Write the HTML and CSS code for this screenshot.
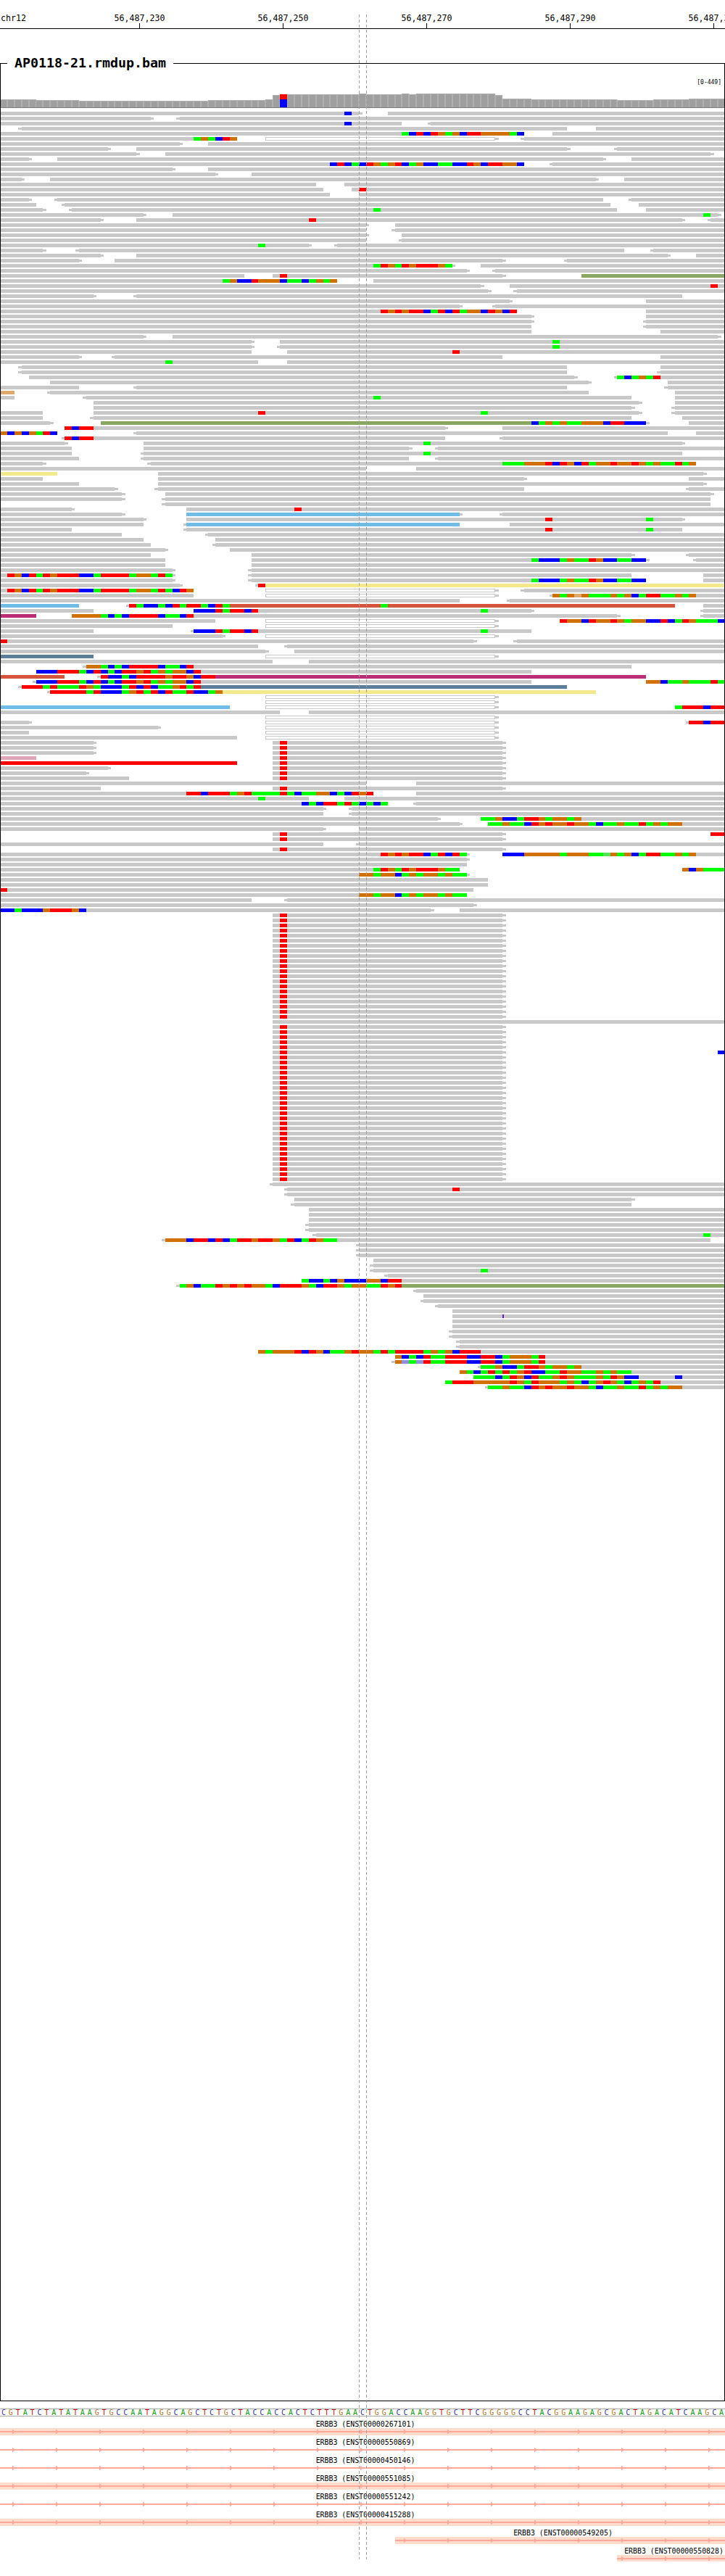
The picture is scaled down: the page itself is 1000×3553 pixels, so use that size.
FILE: index.html
```html
<!DOCTYPE html>
<html lang="en">
<head>
<meta charset="utf-8">
<title>AP0118-21.rmdup.bam</title>
<link rel="stylesheet" href="styles.css">
</head>
<body>
<div class="page">
<header class="ruler">
<div class="chr">chr12</div>
<div class="tick">56,487,230</div>
<div class="tick">56,487,250</div>
<div class="tick">56,487,270</div>
<div class="tick">56,487,290</div>
<div class="tick">56,487,310</div>
</header>

<section class="panel">
<h1 class="panel-title">AP0118-21.rmdup.bam</h1>
<div class="range">[0-449]</div>
<svg class="coverage" viewBox="0 87 101 67" preserveAspectRatio="none">
<defs>
<clipPath id="covclip"><path d="M0 137H5V138H11V139H29V138H37V137H38V131H39V130H50V129H51V130H56V129H57V130H58V129H69V131H70V136H74V137H86V138H91V137H96V136H101V148H0z"/></clipPath>
<path id="covshape" d="M0 137H5V138H11V139H29V138H37V137H38V131H39V130H50V129H51V130H56V129H57V130H58V129H69V131H70V136H74V137H86V138H91V137H96V136H101V148H0z"/>
</defs>
<use href="#covshape" class="cov-edge"/>
<use href="#covshape" class="cov-fill" y="1"/>
<path class="cov-sep" clip-path="url(#covclip)" d="M0 139H101"/>
<path class="cov-red" d="M39 130h1v7h-1z"/>
<path class="cov-blue" d="M39 137h1v11h-1z"/>
<path class="cov-base" d="M0 148h101v1H0z"/>
</svg>

<svg class="reads" viewBox="0 -.357 101 252" preserveAspectRatio="none">
<defs>
<g id="rr"><path class="gr" d="M38 0H70"/><path class="cr" d="M39 0h1"/><path class="tip" d="M70 0h.45"/></g>
<g id="ol"><path class="gr" d="M37 0H69"/><path class="hollow" d="M37.1 0H68.9"/><path class="tip" d="M69 0h.45"/></g>
<g id="c1"><path class="cg" d="M52 0h1M55 0h1M62 0h1"/><path class="cr" d="M53 0h1M56 0h1M58 0h3"/><path class="co" d="M54 0h1M57 0h1M61 0h1"/></g>
<g id="c2"><path class="cr" d="M53 0h1M55 0h1M57 0h2M61 0h1M63 0h1"/><path class="co" d="M54 0h1M56 0h1"/><path class="cb" d="M59 0h1M62 0h1"/><path class="cg" d="M60 0h1M64 0h1"/></g>
<g id="c3"><path class="cr" d="M9 0h1M11 0h2"/><path class="cb" d="M10 0h1"/></g>
<g id="c4"><path class="cg" d="M74 0h1M78 0h1M80 0h2M86 0h2"/><path class="cb" d="M75 0h3M84 0h2M88 0h2"/><path class="co" d="M79 0h1M83 0h1"/><path class="cr" d="M82 0h1"/></g>
<g id="c5"><path class="cr" d="M1 0h1M4 0h1M6 0h1M8 0h3M14 0h4M22 0h1"/><path class="co" d="M2 0h1M7 0h1M19 0h2"/><path class="cb" d="M3 0h1M11 0h2"/><path class="cg" d="M5 0h1M13 0h1M18 0h1M21 0h1M23 0h1"/></g>
<g id="c6"><path class="cb" d="M27 0h3M34 0h1"/><path class="cr" d="M30 0h1M32 0h2M35 0h1"/><path class="cg" d="M31 0h1M67 0h1"/></g>
<g id="c7"><path class="cg" d="M14 0h1M16 0h1M23 0h2"/><path class="cb" d="M15 0h1M17 0h1M22 0h1M25 0h1"/><path class="cr" d="M18 0h4M26 0h1"/></g>
<g id="c8"><path class="cb" d="M5 0h3M12 0h1M14 0h1M16 0h1M26 0h1"/><path class="cr" d="M8 0h3M13 0h1M17 0h2M20 0h1M27 0h1"/><path class="cg" d="M11 0h1M15 0h1M21 0h1M23 0h1"/><path class="co" d="M19 0h1M22 0h1M24 0h2"/></g>
<g id="c9"><path class="cg" d="M67 0h2M72 0h1M76 0h1M79 0h1"/><path class="co" d="M69 0h1M75 0h1M77 0h2M80 0h1"/><path class="cb" d="M70 0h2"/><path class="cr" d="M73 0h2"/></g>
<g id="c10"><path class="cg" d="M68 0h2M71 0h2M82 0h1M84 0h2M87 0h2M90 0h1M92 0h1"/><path class="co" d="M70 0h1M75 0h1M77 0h2M80 0h2M86 0h1M91 0h1M93 0h2"/><path class="cb" d="M73 0h1M83 0h1"/><path class="cr" d="M74 0h1M76 0h1M79 0h1M89 0h1"/></g>
<g id="c11"><path class="co" d="M50 0h2M53 0h2M57 0h1M59 0h2M62 0h1"/><path class="cg" d="M52 0h1M56 0h1M58 0h1M61 0h1M63 0h2"/><path class="cb" d="M55 0h1"/></g>
</defs>

<path class="gr" d="M0 0H50M54 0H101M0 1H21M25 1H101M0 2H56M60 2H101M3 3H79M83 3H101M0 4H56M77 4H101M0 5H27M73 5H101M0 6H25M29 6H101M0 7H15M19 7H79M86 7H101M0 8H19M23 8H99M0 9H4M8 9H84M88 9H101M0 10H46M77 10H101M0 11H24M29 11H101M0 12H30M35 12H101M0 13H3M7 13H83M87 13H101M0 14H44M48 14H101M0 15H45M49 15H101M0 16H46M50 16H101M0 17H4M8 17H84M88 17H101M0 18H5M9 18H85M89 18H101M0 19H6M10 19H86M90 19H101M0 20H20M24 20H100M0 21H14M19 21H95M99 21H101M0 22H51M55 22H101M0 23H51M55 23H101M0 24H51M56 24H101M0 25H51M56 25H101M0 26H43M47 26H101M0 27H6M11 27H87M91 27H101M0 28H14M19 28H93M97 28H101M0 29H11M16 29H70M79 29H101M0 30H52M67 30H101M0 31H65M69 31H101M0 32H34M38 32H70M0 33H31M52 33H101M0 34H67M71 34H101M0 35H68M72 35H101M0 36H13M19 36H95M0 37H71M90 37H101M0 38H64M69 38H101M0 39H53M90 39H101M0 40H74M90 40H101M0 41H74M90 41H101M0 42H74M90 42H101M0 43H74M92 43H101M0 44H20M24 44H100M0 45H35M39 45H101M0 46H35M39 46H101M0 47H35M40 47H101M0 48H11M16 48H70M92 48H101M0 49H36M40 49H101M3 50H79M92 50H101M3 51H79M92 51H101M4 52H80M92 52H101M7 53H82M93 53H101M0 54H11M19 54H79M93 54H101M7 55H82M94 55H101M0 56H2M12 56H88M94 56H101M13 57H89M94 57H101M13 58H88M94 58H101M0 59H6M13 59H89M94 59H101M0 60H6M13 60H88M95 60H101M0 61H7M96 61H101M13 62H62M70 62H101M19 63H93M97 63H101M13 64H62M70 64H101M0 65H9M20 65H95M0 66H10M20 66H57M61 66H101M0 67H10M20 67H95M0 68H11M20 68H57M61 68H101M0 69H6M21 69H70M0 70H51M58 70H101M22 71H98M0 72H6M22 72H73M96 72H101M0 73H11M22 73H98M0 74H16M22 74H73M96 74H101M0 75H17M23 75H99M0 76H17M23 76H99M23 77H99M0 78H10M26 78H101M0 79H17M70 79H101M0 80H20M26 80H95M0 81H20M71 81H101M0 82H10M26 82H95M0 83H17M29 83H101M0 84H20M30 84H101M0 85H21M30 85H101M0 86H23M32 86H101M0 87H21M35 87H88M96 87H101M0 88H23M35 88H74M97 88H101M0 89H23M35 89H101M0 90H24M35 90H101M0 91H1M35 91H88M98 91H101M0 92H24M35 92H74M98 92H101M0 93H25M0 94H1M73 94H101M0 95H27M97 95H101M0 96H64M71 96H101M98 97H101M0 98H13M36 98H74M98 98H101M27 99H86M98 99H101M0 100H30M0 101H24M0 102H13M36 102H74M0 103H31M1 104H66M72 104H101M0 105H36M40 105H101M0 106H37M41 106H101M0 108H38M43 108H101M27 109H88M28 110H74M28 112H74M0 118H39M43 118H101M0 120H4M0 121H22M0 122H4M0 123H33M0 124H13M0 125H13M0 126H13M0 129H15M0 130H12M0 131H18M0 132H51M58 132H101M0 133H14M0 134H26M58 134H101M0 135H43M48 135H101M0 136H42M58 136H101M0 137H45M49 137H101M0 138H45M49 138H101M0 139H61M81 139H101M0 140H64M95 140H101M0 141H45M50 141H101M0 144H45M50 144H101M0 146H53M97 146H101M0 147H65M0 148H65M0 149H52M0 150H50M0 151H68M0 152H68M1 153H66M0 154H50M0 155H35M40 155H101M0 156H66M12 157H60M64 157H101M38 179H101M38 211H101M40 212H101M40 213H101M41 214H88M41 215H88M43 216H101M43 217H101M43 218H101M43 219H101M43 220H101M44 221H101M47 222H99M50 223H101M50 224H101M50 225H101M52 226H101M52 227H101M52 228H101M54 229H101M56 230H101M58 232H101M59 233H101M59 234H101M61 235H101M63 236H101M63 237H101M63 238H101M63 239H101M63 240H101M63 241H101M64 242H101M64 243H101M67 244H101M76 245H101M76 246H101M81 247H101M88 248H101M89 249H101M92 250H101M95 251H101"/>

<path class="tip" d="M50 0h.45M21 1h.45M25 1h-.45M60 2h-.45M3 3h-.45M73 5h-.45M25 6h.45M15 7h.45M79 7h.45M86 7h-.45M19 8h.45M99 8h.45M4 9h.45M84 9h.45M77 10h-.45M24 11h.45M30 12h.45M3 13h.45M83 13h.45M4 17h.45M8 17h-.45M88 17h-.45M9 18h-.45M6 19h.45M10 19h-.45M20 20h.45M100 20h.45M14 21h.45M95 21h.45M99 21h-.45M51 22h.45M55 23h-.45M51 24h.45M56 25h-.45M43 26h.45M47 26h-.45M6 27h.45M11 27h-.45M91 27h-.45M14 28h.45M93 28h.45M11 29h.45M70 29h.45M79 29h-.45M63 30h.45M65 31h.45M69 31h-.45M70 32h.45M67 34h.45M68 35h.45M72 35h-.45M13 36h.45M19 36h-.45M71 37h.45M64 38h.45M69 38h-.45M74 40h.45M74 41h.45M90 41h-.45M90 42h-.45M20 44h.45M100 44h.45M35 45h.45M35 46h.45M39 46h-.45M11 48h.45M16 48h-.45M3 50h-.45M3 51h-.45M92 51h-.45M80 52h.45M86 52h-.45M82 53h.45M19 54h-.45M93 54h-.45M7 55h-.45M12 56h-.45M89 57h.45M88 58h.45M94 58h-.45M89 59h.45M94 59h-.45M13 60h-.45M7 61h.45M90 61h.45M62 62h.45M19 63h-.45M9 64h-.45M70 64h-.45M9 65h.45M95 65h.45M57 66h.45M61 66h-.45M20 67h-.45M20 68h-.45M61 68h-.45M6 69h.45M21 69h-.45M98 71h.45M73 72h.45M98 73h.45M16 74h.45M22 74h-.45M96 74h-.45M17 75h.45M99 75h.45M17 76h.45M23 76h-.45M23 77h-.45M10 78h.45M17 79h.45M64 79h.45M70 79h-.45M20 80h.45M95 80h.45M26 81h-.45M26 82h-.45M29 83h-.45M30 85h-.45M23 86h.45M88 87h.45M96 87h-.45M90 88h.45M97 88h-.45M24 90h.45M35 90h-.45M24 91h.45M35 91h-.45M24 92h.45M35 92h-.45M25 93h.45M36 93h-.45M73 94h-.45M77 95h-.45M71 96h-.45M18 97h-.45M74 98h.45M98 98h-.45M86 99h.45M98 99h-.45M27 102h-.45M31 103h.45M66 104h.45M72 104h-.45M40 105h-.45M37 106h.45M12 109h-.45M14 111h-.45M5 112h-.45M3 113h-.45M7 114h-.45M4 120h.45M96 120h-.45M22 121h.45M13 124h.45M13 125h.45M13 126h.45M15 129h.45M12 130h.45M58 136h-.45M45 137h.45M49 137h-.45M49 138h-.45M61 139h.45M64 140h.45M45 141h.45M50 144h-.45M65 146h.45M65 147h.45M65 150h.45M40 155h-.45M66 156h.45M60 157h.45M38 211h-.45M40 212h-.45M40 213h-.45M88 214h.45M41 215h-.45M43 219h-.45M43 220h-.45M44 221h-.45M23 222h-.45M50 223h-.45M50 224h-.45M50 225h-.45M52 227h-.45M52 228h-.45M54 229h-.45M25 231h-.45M58 232h-.45M59 234h-.45M61 235h-.45M63 240h-.45M63 241h-.45M64 242h-.45M64 243h-.45M55 246h-.45M67 247h-.45M68 251h-.45"/>

<use href="#ol" y="5"/><use href="#ol" y="94"/><use href="#ol" y="95"/><use href="#ol" y="100"/><use href="#ol" y="101"/><use href="#ol" y="103"/><use href="#ol" y="107"/><use href="#ol" y="115"/><use href="#ol" y="116"/><use href="#ol" y="117"/><use href="#ol" y="119"/><use href="#ol" y="120"/><use href="#ol" y="121"/><use href="#ol" y="122"/><use href="#ol" y="123"/>

<use href="#rr" y="124"/><use href="#rr" y="125"/><use href="#rr" y="126"/><use href="#rr" y="127"/><use href="#rr" y="128"/><use href="#rr" y="129"/><use href="#rr" y="130"/><use href="#rr" y="131"/><use href="#rr" y="133"/><use href="#rr" y="142"/><use href="#rr" y="143"/><use href="#rr" y="145"/><use href="#rr" y="158"/><use href="#rr" y="159"/><use href="#rr" y="160"/><use href="#rr" y="161"/><use href="#rr" y="162"/><use href="#rr" y="163"/><use href="#rr" y="164"/><use href="#rr" y="165"/><use href="#rr" y="166"/><use href="#rr" y="167"/><use href="#rr" y="168"/><use href="#rr" y="169"/><use href="#rr" y="170"/><use href="#rr" y="171"/><use href="#rr" y="172"/><use href="#rr" y="173"/><use href="#rr" y="174"/><use href="#rr" y="175"/><use href="#rr" y="176"/><use href="#rr" y="177"/><use href="#rr" y="178"/><use href="#rr" y="180"/><use href="#rr" y="181"/><use href="#rr" y="182"/><use href="#rr" y="183"/><use href="#rr" y="184"/><use href="#rr" y="185"/><use href="#rr" y="186"/><use href="#rr" y="187"/><use href="#rr" y="188"/><use href="#rr" y="189"/><use href="#rr" y="190"/><use href="#rr" y="191"/><use href="#rr" y="192"/><use href="#rr" y="193"/><use href="#rr" y="194"/><use href="#rr" y="195"/><use href="#rr" y="196"/><use href="#rr" y="197"/><use href="#rr" y="198"/><use href="#rr" y="199"/><use href="#rr" y="200"/><use href="#rr" y="201"/><use href="#rr" y="202"/><use href="#rr" y="203"/><use href="#rr" y="204"/><use href="#rr" y="205"/><use href="#rr" y="206"/><use href="#rr" y="207"/><use href="#rr" y="208"/><use href="#rr" y="209"/><use href="#rr" y="210"/>

<use href="#c1" y="30"/><use href="#c1" y="149"/>
<use href="#c2" y="39"/><use href="#c2" y="146"/>
<use href="#c3" y="62"/><use href="#c3" y="64"/>
<use href="#c4" y="88"/><use href="#c4" y="92"/>
<use href="#c5" y="91"/><use href="#c5" y="94"/>
<use href="#c6" y="98"/><use href="#c6" y="102"/>
<use href="#c7" y="99"/><use href="#c7" y="109"/>
<use href="#c8" y="110"/><use href="#c8" y="112"/>
<use href="#c9" y="139"/><use href="#c9" y="247"/>
<use href="#c10" y="140"/><use href="#c10" y="251"/>
<use href="#c11" y="150"/><use href="#c11" y="154"/>

<path class="cbrick" d="M32 97H53M54 97H94M0 111H9"/>
<path class="cmag" d="M0 99H5M30 111H90"/>
<path class="cslate" d="M0 107H13M28 113H79"/>
<path class="csky" d="M26 79H64M26 81H64M0 97H11M0 117H32"/>
<path class="cyel" d="M37 93H101M0 71H8M31 114H83"/>
<path class="colive" d="M81 32H101M14 61H74M56 231H101"/>
<path class="ctan" d="M0 55H2M80 95h1"/>
<path class="cpink" d="M0 127H5"/>
<path class="clav" d="M56 246h1M58 246h1"/>
<path class="clime" d="M84 146h1"/>

<path class="cr" d="M58 4h1M60 4h1M65 4h2M31 5h1M47 10h1M51 10h1M55 10h1M65 10h1M68 10h2M50 15h1M43 21h1M39 32h1M35 33h1M99 34h1M68 39h1M71 39h1M63 47h1M91 52h1M36 59h1M85 61h2M6 63h1M76 69h1M78 69h1M81 69h1M85 69h1M88 69h1M94 69h1M41 78h1M76 80h1M76 82h1M36 93h1M25 94h1M90 95h2M18 97h1M24 97h1M26 97h2M30 97h1M78 100h1M82 100h1M85 100h1M92 100h1M95 100h1M0 104h1M14 111h1M19 111h4M24 111h2M28 111h2M99 112h1M3 113h3M7 113h1M11 113h1M18 113h1M20 113h1M25 113h1M27 113h1M7 114h5M13 114h1M19 114h1M21 114h1M23 114h1M26 114h1M95 117h3M99 117h2M96 120h2M99 120h2M0 128H33M26 134h2M29 134h3M34 134h1M39 134h1M49 134h1M51 134h1M45 136h2M48 136h1M99 142h2M90 146h2M0 153h1M7 157h3M63 212h1M27 222h2M30 222h1M33 222h2M36 222h2M40 222h1M43 222h1M30 231h1M32 231h1M34 231h1M39 231h3M45 231h2M53 231h1M55 231h1M54 230h2M41 244h1M43 244h1M49 244h1M53 244h1M55 244h4M64 244h3M59 245h1M62 245h3M67 245h2M75 245h1M59 246h1M62 246h3M67 246h2M75 246h1M68 248h1M70 248h1M73 248h1M78 248h1M71 249h1M74 249h1M78 249h1M85 249h1M63 250h3M71 250h1M74 250h1M84 250h1M91 250h1"/>
<path class="cg" d="M56 4h1M62 4h1M71 4h1M27 5h1M29 5h1M49 10h1M53 10h1M57 10h1M61 10h2M52 19h1M98 20h1M36 26h1M31 33h1M40 33h2M43 33h1M45 33h1M77 45h1M77 46h1M23 49h1M86 52h1M88 52h1M90 52h1M52 56h1M67 59h1M75 61h1M77 61h1M79 61h2M5 63h1M59 65h1M59 67h1M70 69h3M82 69h1M90 69h1M92 69h2M95 69h1M90 80h1M90 82h1M78 95h1M82 95h3M86 95h1M89 95h1M92 95h2M95 95h1M19 97h1M22 97h1M25 97h1M28 97h1M31 97h1M53 97h1M87 100h1M94 100h1M97 100h3M17 111h1M93 112h2M96 112h3M100 112h1M6 113h1M8 113h3M13 113h1M17 113h1M22 113h2M26 113h1M12 114h1M17 114h1M20 114h1M24 114h2M29 114h1M94 117h1M32 134h1M35 134h4M40 134h1M42 134h2M47 134h1M36 135h1M43 136h1M47 136h1M49 136h1M51 136h1M53 136h1M78 146h1M82 146h2M86 146h1M89 146h1M92 146h2M95 146h1M63 149h1M98 149h3M2 157h1M98 221h1M32 222h1M39 222h1M42 222h1M45 222h2M25 231h1M28 231h2M37 231h1M43 231h1M48 231h1M51 231h2M42 230h1M45 230h1M37 244h1M46 244h2M52 244h1M54 244h1M59 244h1M61 244h1M57 245h1M60 245h2M70 245h1M74 245h1M57 246h1M60 246h2M70 246h1M74 246h1M65 248h1M67 248h1M69 248h1M71 248h1M76 248h2M81 248h2M84 248h1M86 248h2M66 249h3M70 249h1M75 249h2M80 249h3M84 249h1M62 250h1M73 250h1M78 250h1M80 250h1M82 250h1M86 250h1M88 250h1M90 250h1M67 228h1"/>
<path class="cb" d="M48 0h1M48 2h1M57 4h1M59 4h1M64 4h1M72 4h1M30 5h1M46 10h1M48 10h1M50 10h1M56 10h1M59 10h2M63 10h2M67 10h1M72 10h1M33 33h2M39 33h1M42 33h1M67 39h1M70 39h1M87 52h1M74 61h1M84 61h1M87 61h3M1 63h1M3 63h1M7 63h1M77 69h1M80 69h1M24 94h1M88 95h1M20 97h2M23 97h1M29 97h1M81 100h1M90 100h2M93 100h1M100 100h1M15 111h2M18 111h1M27 111h1M92 112h1M14 113h3M19 113h1M21 113h1M14 114h3M22 114h1M27 114h2M98 117h1M98 120h1M28 134h1M41 134h1M46 134h1M48 134h1M42 136h1M44 136h1M50 136h1M52 136h1M70 146h3M88 146h1M96 149h1M0 157h2M3 157h3M11 157h1M100 185h1M26 222h1M29 222h1M31 222h1M41 222h1M27 231h1M38 231h1M44 231h1M43 230h2M46 230h1M48 230h3M53 230h1M42 244h1M45 244h1M63 244h1M56 245h1M58 245h1M65 245h2M69 245h1M65 246h2M69 246h1M66 248h1M74 248h2M69 249h1M73 249h1M87 249h2M94 249h1M81 250h1M87 250h1"/>
<path class="co" d="M61 4h1M63 4h1M67 4h4M28 5h1M32 5h1M52 10h1M54 10h1M58 10h1M66 10h1M70 10h2M32 33h1M36 33h3M44 33h1M46 33h1M65 39h2M69 39h1M89 52h1M76 61h1M78 61h1M81 61h3M0 63h1M2 63h1M4 63h1M73 69h3M79 69h1M83 69h2M86 69h2M89 69h1M91 69h1M96 69h1M26 94h1M77 95h1M79 95h1M81 95h1M85 95h1M87 95h1M94 95h1M96 95h1M79 100h2M83 100h2M86 100h1M88 100h2M96 100h1M10 99h4M12 109h2M23 111h1M26 111h1M90 112h2M95 112h1M12 113h1M24 113h1M18 114h1M30 114h1M33 134h1M44 134h2M50 134h1M73 146h5M79 146h3M85 146h1M87 146h1M94 146h1M96 146h1M95 149h1M97 149h1M6 157h1M10 157h1M23 222h3M35 222h1M38 222h1M44 222h1M26 231h1M31 231h1M33 231h1M35 231h2M42 231h1M47 231h1M49 231h2M54 231h1M47 230h1M51 230h2M36 244h1M38 244h3M44 244h1M48 244h1M50 244h2M60 244h1M62 244h1M55 245h1M71 245h3M55 246h1M71 246h3M64 248h1M72 248h1M79 248h2M83 248h1M85 248h1M72 249h1M77 249h1M79 249h1M83 249h1M86 249h1M66 250h5M72 250h1M75 250h3M79 250h1M83 250h1M85 250h1M89 250h1"/>
<path class="cpurple" d="M70.1 236.6V237.4"/>
</svg>
</section>

<div class="seq"><span class="c">C</span><span class="g">G</span><span class="t">T</span><span class="a">A</span><span class="t">T</span><span class="c">C</span><span class="t">T</span><span class="a">A</span><span class="t">T</span><span class="a">A</span><span class="t">T</span><span class="a">A</span><span class="a">A</span><span class="g">G</span><span class="t">T</span><span class="g">G</span><span class="c">C</span><span class="c">C</span><span class="a">A</span><span class="a">A</span><span class="t">T</span><span class="a">A</span><span class="g">G</span><span class="g">G</span><span class="c">C</span><span class="a">A</span><span class="g">G</span><span class="c">C</span><span class="t">T</span><span class="c">C</span><span class="t">T</span><span class="g">G</span><span class="c">C</span><span class="t">T</span><span class="a">A</span><span class="c">C</span><span class="c">C</span><span class="a">A</span><span class="c">C</span><span class="c">C</span><span class="a">A</span><span class="c">C</span><span class="t">T</span><span class="c">C</span><span class="t">T</span><span class="t">T</span><span class="t">T</span><span class="g">G</span><span class="a">A</span><span class="a">A</span><span class="c">C</span><span class="t">T</span><span class="g">G</span><span class="g">G</span><span class="a">A</span><span class="c">C</span><span class="c">C</span><span class="a">A</span><span class="a">A</span><span class="g">G</span><span class="g">G</span><span class="t">T</span><span class="g">G</span><span class="c">C</span><span class="t">T</span><span class="t">T</span><span class="c">C</span><span class="g">G</span><span class="g">G</span><span class="g">G</span><span class="g">G</span><span class="g">G</span><span class="c">C</span><span class="c">C</span><span class="t">T</span><span class="a">A</span><span class="c">C</span><span class="g">G</span><span class="g">G</span><span class="a">A</span><span class="a">A</span><span class="g">G</span><span class="a">A</span><span class="g">G</span><span class="c">C</span><span class="g">G</span><span class="a">A</span><span class="c">C</span><span class="t">T</span><span class="a">A</span><span class="g">G</span><span class="a">A</span><span class="c">C</span><span class="a">A</span><span class="t">T</span><span class="c">C</span><span class="a">A</span><span class="a">A</span><span class="g">G</span><span class="c">C</span><span class="a">A</span></div>

<svg class="svg-defs" width="0" height="0"><defs>
<pattern id="arrows" width="60" height="10" patternUnits="userSpaceOnUse"><path d="M17 1.5l4 3.5-4 3.5z"/></pattern>
</defs></svg>

<section class="genes">
<div class="gene"><div class="gene-label">ERBB3 (ENST00000267101)</div><div class="gene-track band"><svg class="gene-glyph" viewBox="0 0 1000 10"><rect class="intron" y="4" width="1000" height="2"/><rect class="chevrons" width="1000" height="10"/></svg></div></div>
<div class="gene"><div class="gene-label">ERBB3 (ENST00000550869)</div><div class="gene-track"><svg class="gene-glyph" viewBox="0 0 1000 10"><rect class="intron" y="4" width="1000" height="2"/><rect class="chevrons" width="1000" height="10"/></svg></div></div>
<div class="gene"><div class="gene-label">ERBB3 (ENST00000450146)</div><div class="gene-track"><svg class="gene-glyph" viewBox="0 0 1000 10"><rect class="intron" y="4" width="1000" height="2"/><rect class="chevrons" width="1000" height="10"/></svg></div></div>
<div class="gene"><div class="gene-label">ERBB3 (ENST00000551085)</div><div class="gene-track band"><svg class="gene-glyph" viewBox="0 0 1000 10"><rect class="intron" y="4" width="1000" height="2"/><rect class="chevrons" width="1000" height="10"/></svg></div></div>
<div class="gene"><div class="gene-label">ERBB3 (ENST00000551242)</div><div class="gene-track"><svg class="gene-glyph" viewBox="0 0 1000 10"><rect class="intron" y="4" width="1000" height="2"/><rect class="chevrons" width="1000" height="10"/></svg></div></div>
<div class="gene"><div class="gene-label">ERBB3 (ENST00000415288)</div><div class="gene-track band"><svg class="gene-glyph" viewBox="0 0 1000 10"><rect class="intron" y="4" width="1000" height="2"/><rect class="chevrons" width="1000" height="10"/></svg></div></div>
<div class="gene gene-from-545"><div class="gene-label">ERBB3 (ENST00000549205)</div><div class="gene-track band"><svg class="gene-glyph" viewBox="545 0 455 10"><rect class="intron" y="4" width="1000" height="2"/><rect class="chevrons" width="1000" height="10"/></svg></div></div>
<div class="gene gene-from-851"><div class="gene-label">ERBB3 (ENST00000550828)</div><div class="gene-track band gene-track-short"><svg class="gene-glyph" viewBox="851 0 149 10"><rect class="intron" y="4" width="1000" height="2"/><rect class="chevrons" width="1000" height="10"/></svg></div></div>
</section>

<div class="guide guide-left"></div>
<div class="guide guide-right"></div>
</div>
</body>
</html>
```
FILE: styles.css
```css
html, body { margin: 0; padding: 0; background: #fff; }
.page { position: relative; width: 1000px; height: 3553px; overflow: hidden; color: #000; font-family: "DejaVu Sans Mono", monospace; }

/* ruler */
.ruler { display: flex; align-items: flex-end; height: 39px; border-bottom: 1px solid #000; font-size: 11.6px; line-height: 14px; }
.chr { flex: 0 0 92.5px; padding-left: 1px; padding-bottom: 7px; }
.tick { flex: 0 0 198px; text-align: center; white-space: nowrap; }
.tick::after { content: ""; display: block; width: 1px; height: 7px; background: #000; margin: 0 auto; }

/* alignment panel */
.panel { position: relative; height: 3225px; margin-top: 47px; }
.panel::after { content: ""; position: absolute; inset: 0; border: 1px solid #000; pointer-events: none; }
.panel-title { position: absolute; left: 10px; top: -11px; z-index: 1; margin: 0; padding: 0 10px; background: #fff; font-size: 18.3px; line-height: 22px; font-weight: 700; }
.range { position: absolute; right: 5px; top: 21px; font-size: 8px; line-height: 12px; z-index: 1; }

.coverage { display: block; width: 1000px; height: 67px; shape-rendering: crispEdges; }
.cov-edge { fill: #b2b2b2; }
.cov-fill { fill: #9f9f9f; }
.cov-sep { fill: none; stroke: #b0b0b0; stroke-width: 40; stroke-dasharray: .2 .8; stroke-dashoffset: .1; }
.cov-red { fill: #f00; }
.cov-blue { fill: #00f; }
.cov-base { fill: #7f7f7f; }

.reads { display: block; width: 1000px; height: 1764px; fill: none; stroke-width: .714; shape-rendering: crispEdges; }
.gr { stroke: #c8c8c8; }
.tip { stroke: #c8c8c8; stroke-width: .3; }
.hollow { stroke: #fff; stroke-width: .43; }
.cr { stroke: #f00; }
.cg { stroke: #0f0; }
.cb { stroke: #00f; }
.co { stroke: #d17105; }
.cbrick { stroke: #d5553c; }
.cmag { stroke: #bb2d76; }
.cslate { stroke: #5b7f98; }
.csky { stroke: #6fbce6; }
.cyel { stroke: #f3e88a; }
.colive { stroke: #88a862; }
.ctan { stroke: #dcaa6c; }
.cpink { stroke: #dea6b8; }
.clav { stroke: #8f8fdc; }
.clime { stroke: #55e055; }
.cpurple { stroke: #6a1bc0; stroke-width: .2; }

/* reference sequence */
.seq { display: grid; grid-template-columns: repeat(101, 1fr); margin-top: 10px; height: 9px; border-top: 1px solid #aaa; border-bottom: 1px solid #aaa; font-size: 10px; line-height: 9px; text-align: center; }
.seq .a { color: #0a9a0a; }
.seq .c { color: #3333aa; }
.seq .g { color: #b5762a; }
.seq .t { color: #c81414; }

/* gene tracks */
.svg-defs { position: absolute; }
.genes { margin-top: 5px; }
.gene { height: 25px; }
.gene-from-545 { margin-left: 545px; }
.gene-from-851 { margin-left: 851px; }
.gene-label { height: 11px; padding-left: 8px; font-size: 9.9px; line-height: 12px; text-align: center; white-space: nowrap; }
.gene-track { height: 10px; overflow: hidden; }
.gene-track-short { height: 9px; }
.band { background: #ffdccc; }
.gene-glyph { display: block; width: 100%; height: 10px; }
.intron { fill: #ffa899; }
.chevrons { fill: url(#arrows); }
#arrows path { fill: #ffa899; }

/* dashed guides */
.guide { position: absolute; top: 20px; width: 1px; height: 3510px; background: repeating-linear-gradient(to bottom, #a0a0a0 0 4px, transparent 4px 7px); }
.guide-left { left: 495px; }
.guide-right { left: 505px; }
```
